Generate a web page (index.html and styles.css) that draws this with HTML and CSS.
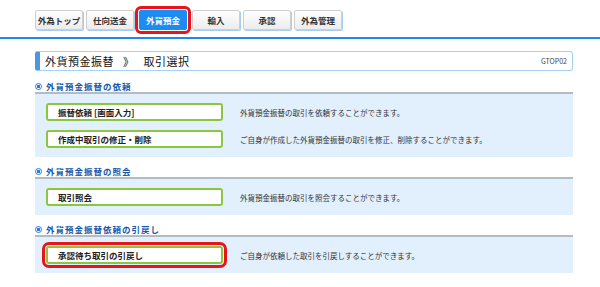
FILE: index.html
```html
<!DOCTYPE html>
<html lang="ja">
  <head>
    <meta charset="UTF-8" />
    <meta name="viewport" content="width=device-width, initial-scale=1.0" />
    <title>外貨預金振替</title>

    <link rel="stylesheet" href="styles.css">
  </head>
  <body>
    <div class="header">
      <div class="tabs">
        <div class="tab">外為トップ</div>
        <div class="tab">仕向送金</div>
        <div class="tab active">外貨預金</div>
        <div class="tab">輸入</div>
        <div class="tab">承認</div>
        <div class="tab">外為管理</div>
      </div>
    </div>

    <div class="content">
      <div class="page-title">
        <span class="title-text">外貨預金振替 <span class="sep">》</span> 取引選択</span>
        <span class="screen-id">GTOP02</span>
      </div>

      <div class="section-head"><span class="dot"></span>外貨預金振替の依頼</div>
      <div class="panel">
        <div class="row">
          <div class="btn">振替依頼 [画面入力]</div>
          <div class="desc">外貨預金振替の取引を依頼することができます。</div>
        </div>
        <div class="row">
          <div class="btn">作成中取引の修正・削除</div>
          <div class="desc">ご自身が作成した外貨預金振替の取引を修正、削除することができます。</div>
        </div>
      </div>

      <div class="section-head"><span class="dot"></span>外貨預金振替の照会</div>
      <div class="panel">
        <div class="row">
          <div class="btn">取引照会</div>
          <div class="desc">外貨預金振替の取引を照会することができます。</div>
        </div>
      </div>

      <div class="section-head"><span class="dot"></span>外貨預金振替依頼の引戻し</div>
      <div class="panel">
        <div class="row">
          <div class="btn marked">承認待ち取引の引戻し</div>
          <div class="desc">ご自身が依頼した取引を引戻しすることができます。</div>
        </div>
      </div>
    </div>
  </body>
</html>
```

FILE: styles.css
```css
body {
  margin: 0;
  background: #fff;
  font-family: "Noto Sans CJK JP", "Noto Sans", sans-serif;
  color: #222;
}

.header {
  padding: 10px 0 0 35px;
  border-bottom: 2px solid #1e88f0;
  height: 27px;
}

.tabs {
  display: flex;
  gap: 3px;
}

.tab {
  width: 48px;
  height: 20px;
  line-height: 19px;
  box-sizing: border-box;
  text-align: center;
  font-size: 8.5px;
  font-weight: bold;
  color: #333;
  background: linear-gradient(#fff, #ececec);
  border: 1px solid #cfcfcf;
  border-radius: 2px;
  box-shadow: 1px 1px 0 #a9cdef;
}

.tab.active {
  margin: 0 2px;
  background: #1c8cf2;
  border-color: #1c8cf2;
  color: #fff;
  outline: 3px solid #e8141c;
  outline-offset: 1px;
  box-shadow: none;
}

.content {
  padding: 0 27px 0 35px;
}

.page-title {
  margin-top: 12px;
  height: 20px;
  box-sizing: border-box;
  display: flex;
  align-items: center;
  justify-content: space-between;
  border: 1px solid #a6d2f6;
  border-left: 5px solid #4a98e4;
  border-radius: 3px;
  padding: 0 5px 0 5px;
}

.title-text {
  font-size: 11px;
  letter-spacing: 0.5px;
  color: #111;
}

.sep {
  margin: 0 6px;
}

.screen-id {
  font-size: 7px;
  color: #444;
}

.section-head {
  margin-top: 8px;
  height: 12px;
  display: flex;
  align-items: center;
  gap: 4px;
  font-size: 8.5px;
  font-weight: bold;
  letter-spacing: 1px;
  color: #1557a8;
}

.page-title + .section-head {
  margin-top: 9px;
}

.dot {
  width: 5px;
  height: 5px;
  border: 1.5px solid #2a7be0;
  border-radius: 50%;
  background: radial-gradient(#2a7be0 45%, #fff 55%);
}

.panel {
  background: #e2f0fd;
  border-top: 2px solid #b3bcc4;
  padding: 9px 0 9px 11px;
  display: flex;
  flex-direction: column;
  gap: 9px;
}

.row {
  display: flex;
  align-items: center;
}

.btn {
  width: 177px;
  height: 18px;
  box-sizing: border-box;
  border: 2px solid #8cc63e;
  border-radius: 3px;
  background: #fff;
  padding-left: 10px;
  line-height: 14px;
  font-size: 8.5px;
  font-weight: bold;
  color: #222;
}

.btn.marked {
  outline: 3px solid #e8141c;
  outline-offset: 1px;
  border-radius: 3px;
}

.desc {
  margin-left: 17px;
  font-size: 7.5px;
  color: #333;
}
```
